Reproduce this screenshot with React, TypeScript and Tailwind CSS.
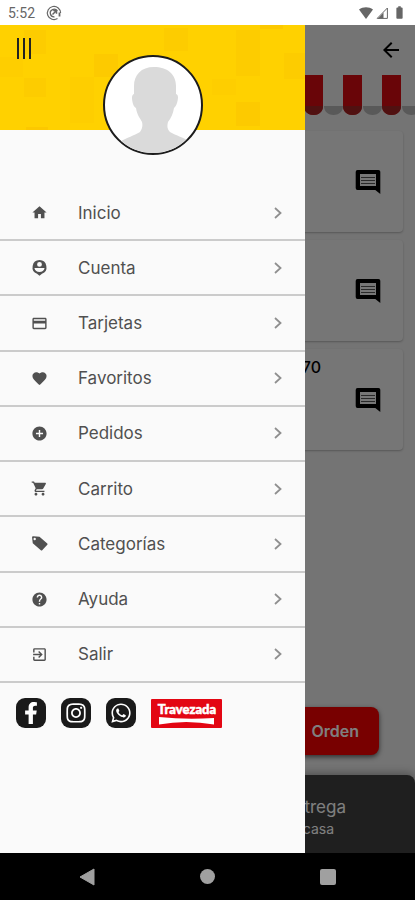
import React from 'react';
import type { IconType } from 'react-icons';
import {
  MdAddCircle,
  MdBatteryFull,
  MdCreditCard,
  MdExitToApp,
  MdFavorite,
  MdHelp,
  MdHome,
  MdArrowBack,
  MdShoppingCart,
} from 'react-icons/md';
import { FaFacebookF, FaInstagram, FaWhatsapp } from 'react-icons/fa';

type IconProps = { className?: string };

const AccountPin = ({ className }: IconProps) => (
  <svg viewBox="0 0 24 24" className={className} fill="currentColor" aria-hidden="true">
    <path
      fillRule="evenodd"
      d="M12 1.500a10 10 0 0 0-3.500 19.300L12 23.500l3.500-2.700A10 10 0 0 0 12 1.500zM12 4.200a3.400 3.400 0 1 1 0 6.800 3.400 3.400 0 0 1 0-6.800zM4.800 12.800h14.400c-.7 3.600-3.600 5.600-7.200 5.600s-6.500-2-7.200-5.600z"
    />
  </svg>
);

const Tag = ({ className }: IconProps) => (
  <svg viewBox="0 0 24 24" className={className} fill="currentColor" aria-hidden="true">
    <path
      fillRule="evenodd"
      d="M1.500 3.500c0-1 .7-1.700 1.700-1.700l8.800.7 11 9.500c.6.600.6 1.300 0 1.900l-7.200 7.700c-.6.600-1.300.6-1.900 0L2.500 11.500zM5.200 4a1.700 1.700 0 1 0 0 3.400 1.700 1.700 0 0 0 0-3.400z"
    />
  </svg>
);

const CommentIcon = ({ className }: IconProps) => (
  <svg viewBox="0 0 26 26" className={className} aria-hidden="true">
    <path
      fill="currentColor"
      fillRule="evenodd"
      d="M2.500 1h21A1.800 1.800 0 0 1 25.300 2.800V25l-5-4H2.500A2 2 0 0 1 .7 19V3A2 2 0 0 1 2.500 1zM5 5v12h16V5z"
    />
    <path stroke="currentColor" strokeOpacity=".65" d="M6 8.500h14M6 11.500h14M6 14.500h14" />
  </svg>
);

const menu: { label: string; Icon: IconType | React.FC<IconProps> }[] = [
  { label: 'Inicio', Icon: MdHome },
  { label: 'Cuenta', Icon: AccountPin },
  { label: 'Tarjetas', Icon: MdCreditCard },
  { label: 'Favoritos', Icon: MdFavorite },
  { label: 'Pedidos', Icon: MdAddCircle },
  { label: 'Carrito', Icon: MdShoppingCart },
  { label: 'Categorías', Icon: Tag },
  { label: 'Ayuda', Icon: MdHelp },
  { label: 'Salir', Icon: MdExitToApp },
];

const social = [
  { label: 'Facebook', Icon: FaFacebookF },
  { label: 'Instagram', Icon: FaInstagram },
  { label: 'WhatsApp', Icon: FaWhatsapp },
];

const products = [{ price: '' }, { price: '' }, { price: '70' }];

const StatusBar = () => (
  <div className="flex h-[25px] shrink-0 items-center bg-white px-2 text-[#666]">
    <span className="font-[Roboto,sans-serif] text-sm leading-5">5:52</span>
    <svg viewBox="0 0 16 16" className="ml-[11px] size-4" fill="none" stroke="currentColor" aria-hidden="true">
      <path d="M11.500 13.600A6.600 6.600 0 1 1 14.600 8" strokeWidth="1.200" />
      <path d="M8.500 11.800A3.800 3.800 0 1 1 11.300 6" strokeWidth="1.300" />
      <path d="M6.500 9.500l4-4M7.200 5.500h3.300v3.300" strokeWidth="1.500" />
      <path d="M13.500 7.500v4" strokeWidth="1.800" />
    </svg>
    <div className="ml-auto flex items-center">
      <svg viewBox="0 0 14 12" className="h-3 w-[14px]" fill="currentColor" aria-hidden="true">
        <path d="M0 2.500C4-.6 10-.6 14 2.500L7 12z" />
      </svg>
      <svg viewBox="0 0 12 12" className="ml-[3px] size-3" fill="none" stroke="currentColor" aria-hidden="true">
        <path d="M1.200 11.400L11.400 1v10.400z" />
        <path d="M2 11.500L7.500 5.500v6z" fill="currentColor" stroke="none" />
      </svg>
      <MdBatteryFull className="ml-1 size-[15px]" />
    </div>
  </div>
);

const Awning = () => (
  <svg className="block h-10 w-full" aria-hidden="true">
    <defs>
      <pattern id="awning" x="31" y="0" width="39" height="40" patternUnits="userSpaceOnUse">
        <path d="M0 0h19v31c0 12-19 12-19 0z" fill="#d20a10" />
        <path d="M0 31h19c0 12-19 12-19 0z" fill="#a02222" />
        <path d="M20 31h19c0 12-19 12-19 0z" fill="#b2b2b2" />
      </pattern>
    </defs>
    <rect width="100%" height="40" fill="url(#awning)" />
  </svg>
);

const OrderPage = () => (
  <main className="flex flex-1 flex-col bg-[#e8e8e8]">
    <div className="flex h-[50px] items-center justify-end pr-3">
      <button type="button" aria-label="Volver">
        <MdArrowBack className="size-6" />
      </button>
    </div>
    <Awning />
    <ul className="mt-4 flex flex-col gap-2 px-3">
      {products.map((product, i) => (
        <li
          key={i}
          className="flex h-[101px] items-start justify-end rounded bg-[#ececec] pr-[22px] shadow-[0_1px_2px_rgba(0,0,0,0.25)]"
        >
          <span className="mr-[34px] pt-2 text-base leading-5 font-medium">{product.price}</span>
          <button type="button" aria-label="Comentario" className="self-center">
            <CommentIcon className="size-[26px]" />
          </button>
        </li>
      ))}
    </ul>
    <div className="mt-auto px-9 pb-5">
      <button
        type="button"
        className="flex h-12 w-full items-center justify-end rounded-lg bg-[#f00000] pr-5 text-base font-semibold text-white shadow-[0_2px_5px_rgba(0,0,0,0.6)]"
      >
        Orden
      </button>
    </div>
    <footer className="h-[78px] rounded-t-lg bg-[#3e3e3e] pt-5 text-white shadow-[0_-2px_8px_rgba(0,0,0,0.3)]">
      <p className="pr-[69px] text-right text-[17px] leading-6">Entrega</p>
      <p className="pr-[81px] text-right text-sm leading-5">casa</p>
    </footer>
  </main>
);

const Avatar = () => (
  <div className="relative mx-auto -mt-[75px] size-[100px] overflow-hidden rounded-full border-2 border-[#1c1c1c] bg-white">
    <svg viewBox="0 0 96 96" className="size-full" fill="#dadada" role="img" aria-label="Foto de perfil">
      <path d="M49 10c-13 0-20 8-20 19v8c-3 1-2 6-1 10 1 3 2 3 3 4 1 7 4 10 6 14 1 4 0 7-2 10-6 4-13 5-20 10v21h70V85c-6-5-14-6-20-10-3-3-3-6-2-10 3-4 5-8 6-14 1-1 2-2 3-5 1-4 2-8-1-9v-8c0-12-9-19-22-19z" />
    </svg>
  </div>
);

const Travezada = () => (
  <a href="#travezada" aria-label="Travezada" className="ml-[15px]">
    <svg viewBox="0 0 71 29" className="block h-[29px] w-[71px]">
      <rect width="71" height="29" rx="1" fill="#e30613" />
      <text
        x="36"
        y="15"
        textAnchor="middle"
        fill="#fff"
        stroke="#fff"
        strokeWidth=".5"
        fontFamily="Lato, sans-serif"
        fontSize="13"
        fontWeight="900"
      >
        Travezada
      </text>
      <path d="M8 18q27 3 55 1v6.500q-28-5-55 0z" fill="#fff" />
    </svg>
  </a>
);

const Drawer = () => (
  <aside className="absolute inset-y-0 left-0 w-[305px] bg-[#fafafa]">
    <header className="relative h-[105px] bg-[#ffd100] pt-[13px] pl-[17px]">
      <svg className="absolute inset-0 size-full" fill="#fcc800" aria-hidden="true">
        <rect x="24" y="5" width="22" height="24" opacity=".5" />
        <rect x="0" y="32" width="23" height="20" opacity=".3" />
        <rect x="94" y="29" width="24" height="23" opacity=".7" />
        <rect x="24" y="53" width="22" height="19" opacity=".5" />
        <rect x="70" y="52" width="24" height="46" opacity=".3" />
        <rect x="26" y="102" width="22" height="3" />
        <rect x="164" y="3" width="24" height="23" opacity=".5" />
        <rect x="236" y="5" width="24" height="46" opacity=".5" />
        <rect x="260" y="0" width="23" height="4" />
        <rect x="284" y="28" width="21" height="26" opacity=".5" />
        <rect x="212" y="54" width="24" height="16" opacity=".3" />
        <rect x="236" y="77" width="24" height="24" opacity=".8" />
      </svg>
      <button type="button" aria-label="Cerrar menú" className="relative flex gap-1">
        <span className="h-[21px] w-[2px] bg-[#222]" />
        <span className="h-[21px] w-[2px] bg-[#222]" />
        <span className="h-[21px] w-[2px] bg-[#222]" />
      </button>
    </header>
    <Avatar />
    <nav className="mt-[31px]">
      <ul className="grid h-[497px] auto-rows-fr">
        {menu.map(({ label, Icon }) => (
          <li key={label} className="border-b-2 border-[#cbcbcb]">
            <a href={`#${label.toLowerCase()}`} className="flex h-full items-center pr-[22px] pl-[31px] text-[#505050]">
              <Icon className="size-[17px]" />
              <span className="ml-[30px] text-[17px] leading-6">{label}</span>
              <svg viewBox="0 0 10 14" className="ml-auto h-[14px] w-[10px]" fill="none" stroke="#8f8f8f" strokeWidth="1.800" aria-hidden="true">
                <path d="M2 2l5.500 5L2 12" />
              </svg>
            </a>
          </li>
        ))}
      </ul>
    </nav>
    <div className="flex items-center pt-[15px] pl-4">
      <div className="flex gap-[15px]">
        {social.map(({ label, Icon }) => (
          <a
            key={label}
            href={`#${label.toLowerCase()}`}
            aria-label={label}
            className="flex size-[30px] items-center justify-center rounded-[9px] bg-[#1a1a1a] text-white"
          >
            <Icon className="size-[22px]" />
          </a>
        ))}
      </div>
      <Travezada />
    </div>
  </aside>
);

const SystemNav = () => (
  <div className="flex h-[47px] shrink-0 items-center justify-around bg-black px-[27px] text-[#a0a0a0]">
    <button type="button" aria-label="Atrás">
      <svg viewBox="0 0 16 18" className="h-[18px] w-4" fill="currentColor">
        <path d="M15 1v16L1 9z" stroke="currentColor" strokeLinejoin="round" />
      </svg>
    </button>
    <button type="button" aria-label="Inicio del sistema" className="size-[15px] rounded-full bg-[#a0a0a0]" />
    <button type="button" aria-label="Recientes" className="size-4 rounded-[2px] bg-[#a0a0a0]" />
  </div>
);

const App: React.FC = () => (
  <div className="flex min-h-screen flex-col font-[Inter,sans-serif]">
    <StatusBar />
    <div className="relative flex flex-1 flex-col">
      <OrderPage />
      <div className="absolute inset-0 bg-black/50" />
      <Drawer />
    </div>
    <SystemNav />
  </div>
);

export default App;
